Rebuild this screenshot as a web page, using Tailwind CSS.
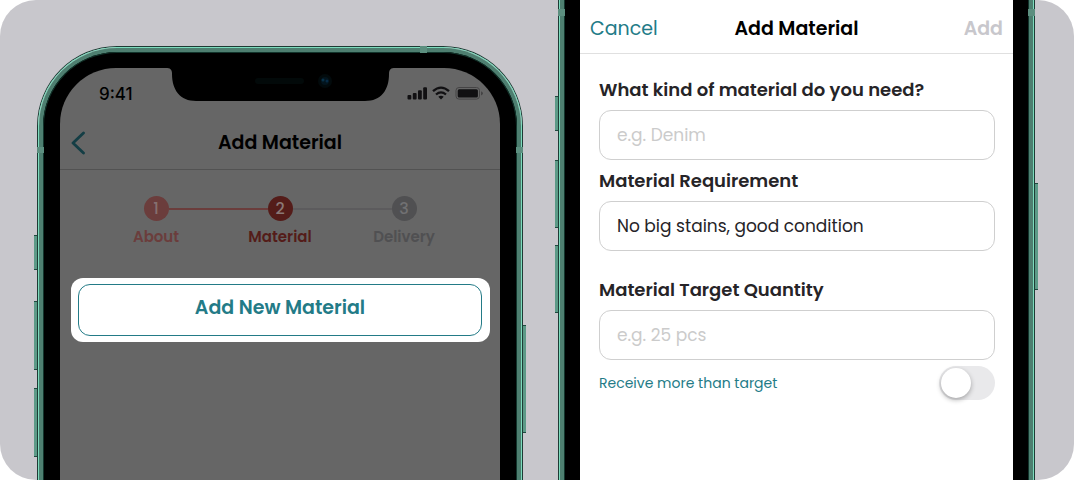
<!DOCTYPE html>
<html lang="en">
<head>
<meta charset="utf-8">
<meta name="viewport" content="width=device-width, initial-scale=1">
<title>Add Material</title>
<script src="https://cdn.jsdelivr.net/npm/@tailwindcss/browser@4"></script>
</head>
<body class="bg-white font-[Poppins,Inter,sans-serif]">
<main class="flex min-h-screen gap-[35px] overflow-hidden rounded-[36px] bg-[#c8c7cc] pr-[39px] pl-[37px]">

  <!-- Phone: material step -->
  <section class="relative mt-[46px] flex min-w-0 flex-[486]">
    <span class="absolute top-[189px] -left-[3px] h-[35px] w-[3px] border-y border-[#1f4a3f] bg-[#5c9a87]"></span>
    <span class="absolute top-[255px] -left-[3px] h-[69px] w-[3px] border-y border-[#1f4a3f] bg-[#5c9a87]"></span>
    <span class="absolute top-[342px] -left-[3px] h-[69px] w-[3px] border-y border-[#1f4a3f] bg-[#5c9a87]"></span>
    <span class="absolute top-[279px] -right-[3px] h-[108px] w-[3px] border-y border-[#1f4a3f] bg-[#5c9a87]"></span>
    <span class="absolute top-[101px] left-0 z-10 h-[6px] w-[7px] bg-[#5c8f7f]"></span>
    <span class="absolute top-[101px] right-0 z-10 h-[6px] w-[7px] bg-[#5c8f7f]"></span>
    <span class="absolute top-0 right-[96px] z-10 h-[7px] w-[7px] bg-[#5c8f7f]"></span>
    <div class="flex min-w-0 flex-1 rounded-t-[80px] border border-b-0 border-[#1d3b34]">
      <div class="flex min-w-0 flex-1 rounded-t-[79px] border border-b-0 border-[#7cdcbd]">
        <div class="flex min-w-0 flex-1 rounded-t-[78px] border-4 border-b-0 border-[#4e7f70] bg-black">
          <div class="flex min-w-0 flex-1 rounded-t-[74px] border border-b-0 border-[#12352c] bg-black px-4 pt-[15px]">
            <div class="min-w-0 flex-1 rounded-t-[56px] bg-[#666666]">
              <div class="grid grid-cols-[1fr_229px_1fr]">
                <div class="pt-[15px] pl-[39px] font-[Inter,sans-serif] text-[17px] leading-[22px] font-medium text-black">9:41</div>
                <svg class="h-[33px] w-full" viewBox="0 0 229 33" aria-hidden="true">
                  <path fill="#000" d="M0 0C4 0 6 1 6 6C6 22 14 33 30 33H199C215 33 223 22 223 6C223 1 225 0 229 0Z"/>
                  <rect x="89" y="10" width="49" height="6" rx="3" fill="#020909"/>
                  <circle cx="159" cy="13" r="7" fill="#020a0c"/>
                  <circle cx="159" cy="13" r="4" fill="#03141d"/>
                  <circle cx="157" cy="12" r="1.5" fill="#083149"/>
                  <circle cx="161" cy="13" r="1.5" fill="#062a45"/>
                </svg>
                <div class="pt-[18px] pl-[12px]">
                  <svg class="h-[15px] w-[77px]" viewBox="0 0 77 15" aria-hidden="true">
                    <g fill="#111012">
                      <rect x="0.5" y="9" width="3.8" height="4.5" rx="1"/>
                      <rect x="5.8" y="7" width="3.8" height="6.5" rx="1"/>
                      <rect x="11" y="4.2" width="3.8" height="9.3" rx="1"/>
                      <rect x="16.2" y="1.2" width="3.8" height="12.3" rx="1"/>
                    </g>
                    <g fill="none" stroke="#111012" stroke-width="2.3">
                      <path d="M26 5.200Q34 -2 42 5.200"/>
                      <path d="M29 8.500Q34 4.200 39 8.500"/>
                    </g>
                    <path fill="#111012" d="M31.3 10.700Q34 8.800 36.700 10.700L34 13.400Z"/>
                    <rect x="49" y="1.500" width="23.500" height="11.600" rx="3" fill="none" stroke="#454445"/>
                    <rect x="50.700" y="3.200" width="20.200" height="8.200" rx="1.500" fill="#111012"/>
                    <path fill="#454445" d="M74 5.200Q76 6 76 7.300T74 9.400Z"/>
                  </svg>
                </div>
              </div>
              <header class="mt-3 grid h-[53px] grid-cols-[60px_1fr_60px] items-center border-b border-[#525252]">
                <button type="button" aria-label="Back" class="pl-[11px]">
                  <svg class="h-6 w-[14px]" viewBox="0 0 14 24" fill="none" stroke="#143e45" stroke-width="2.800" stroke-linecap="round" stroke-linejoin="round" aria-hidden="true"><path d="M12.500 2L2 12L12.500 22"/></svg>
                </button>
                <h1 class="text-center text-[19px] leading-7 font-semibold whitespace-nowrap text-black">Add Material</h1>
              </header>
              <ol class="mx-[34px] mt-[26px] grid grid-cols-3 text-center text-[15px] leading-5 font-semibold">
                <li class="text-[#6b3d3c]">
                  <div class="grid grid-cols-[1fr_25px_1fr] items-center">
                    <span></span>
                    <span class="h-[25px] rounded-full bg-[#6b3d3c] text-[16px] leading-[25px] font-medium text-[#857070]">1</span>
                    <span class="h-[2px] bg-[#6b3d3c]"></span>
                  </div>
                  <div class="mt-[6px]">About</div>
                </li>
                <li class="text-[#541c19]">
                  <div class="grid grid-cols-[1fr_25px_1fr] items-center">
                    <span class="h-[2px] bg-[#6b3d3c]"></span>
                    <span class="h-[25px] rounded-full bg-[#541c19] text-[16px] leading-[25px] font-medium text-[#8a7876]">2</span>
                    <span class="h-[2px] bg-[#5c5b5d]"></span>
                  </div>
                  <div class="mt-[6px]">Material</div>
                </li>
                <li class="text-[#505052]">
                  <div class="grid grid-cols-[1fr_25px_1fr] items-center">
                    <span class="h-[2px] bg-[#5c5b5d]"></span>
                    <span class="h-[25px] rounded-full bg-[#505052] text-[16px] leading-[25px] font-medium text-[#717173]">3</span>
                    <span></span>
                  </div>
                  <div class="mt-[6px]">Delivery</div>
                </li>
              </ol>
              <div class="mr-[10px] mb-6 ml-[11px] mt-[31px] rounded-xl bg-white py-[6px] pr-2 pl-[7px]">
                <button type="button" class="h-[52px] w-full rounded-xl border border-[#237b87] pb-1 text-[19px] leading-7 font-semibold text-[#237b87]">Add New Material</button>
              </div>
            </div>
          </div>
        </div>
      </div>
    </div>
  </section>

  <!-- Phone: new material form -->
  <section class="relative flex min-w-0 flex-[477]">
    <span class="absolute top-[96px] -left-[3px] h-[35px] w-[3px] border-y border-[#1f4a3f] bg-[#5c9a87]"></span>
    <span class="absolute top-[160px] -left-[3px] h-[68px] w-[3px] border-y border-[#1f4a3f] bg-[#5c9a87]"></span>
    <span class="absolute top-[245px] -left-[3px] h-[68px] w-[3px] border-y border-[#1f4a3f] bg-[#5c9a87]"></span>
    <span class="absolute top-[183px] -right-[3px] h-[107px] w-[3px] border-y border-[#1f4a3f] bg-[#5c9a87]"></span>
    <span class="absolute top-[9px] left-0 z-10 h-[7px] w-[7px] bg-[#5c8f7f]"></span>
    <span class="absolute top-[9px] right-0 z-10 h-[7px] w-[7px] bg-[#5c8f7f]"></span>
    <div class="flex min-w-0 flex-1 border-x border-[#1d3b34]">
      <div class="flex min-w-0 flex-1 border-x border-[#7cdcbd]">
        <div class="flex min-w-0 flex-1 border-x-4 border-[#4e7f70]">
          <div class="flex min-w-0 flex-1 border-x border-[#12352c] bg-black px-[15px]">
            <form class="min-w-0 flex-1 bg-white text-[#262427]">
              <header class="grid h-[54px] grid-cols-[1fr_auto_1fr] items-center border-b border-[#e0e0e0] px-[10px] pt-[5px] text-[19px] leading-7">
                <button type="button" class="justify-self-start text-[#237b87]">Cancel</button>
                <h2 class="font-semibold text-black">Add Material</h2>
                <button type="button" class="justify-self-end font-semibold text-[#c8c7cc]">Add</button>
              </header>
              <div class="flex flex-col pt-[22px] pr-[18px] pl-[19px] text-[17px]">
                <label for="kind" class="text-[18px] leading-7 font-semibold whitespace-nowrap">What kind of material do you need?</label>
                <input id="kind" type="text" placeholder="e.g. Denim" class="mt-[6px] h-[50px] w-full rounded-xl border border-[#cfcfcf] px-[17px] placeholder:text-[#cbcbcb]">
                <label for="requirement" class="mt-[7px] text-[18px] leading-7 font-semibold">Material Requirement</label>
                <input id="requirement" type="text" value="No big stains, good condition" class="mt-[6px] h-[50px] w-full rounded-xl border border-[#cfcfcf] px-[17px]">
                <label for="quantity" class="mt-[25px] text-[18px] leading-7 font-semibold">Material Target Quantity</label>
                <input id="quantity" type="text" placeholder="e.g. 25 pcs" class="mt-[6px] h-[50px] w-full rounded-xl border border-[#cfcfcf] px-[17px] placeholder:text-[#cbcbcb]">
                <div class="mt-[6px] flex items-center justify-between">
                  <label for="more" class="text-[14px] leading-5 text-[#237b87]">Receive more than target</label>
                  <input id="more" type="checkbox" role="switch" class="flex h-[34px] w-14 appearance-none items-center rounded-full bg-[#e9e9eb] p-[2px] before:size-[30px] before:rounded-full before:bg-white before:shadow-[0_2px_5px_rgba(0,0,0,0.3)] before:content-[''] checked:justify-end checked:bg-[#237b87]">
                </div>
              </div>
            </form>
          </div>
        </div>
      </div>
    </div>
  </section>
</main>
</body>
</html>
